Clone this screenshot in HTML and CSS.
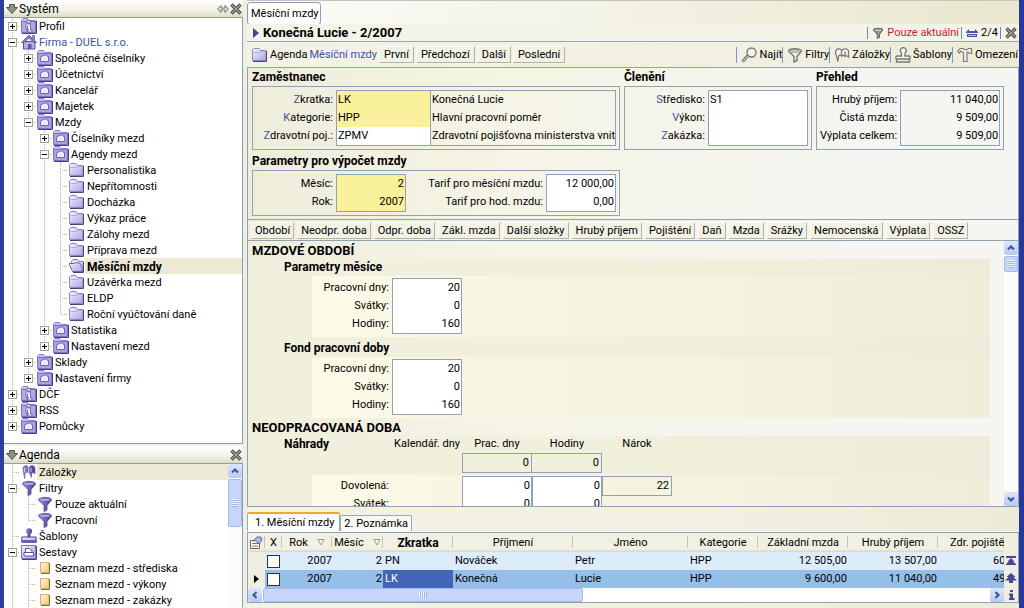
FILE: index.html
```html
<!DOCTYPE html>
<html lang="cs">
<head>
<meta charset="utf-8">
<title>Měsíční mzdy</title>
<link rel="stylesheet" href="styles.css">
</head>
<body>
<svg class="defs" aria-hidden="true">
  <defs>
    <linearGradient id="g" x1="0" y1="0" x2="1" y2="1"><stop offset="0" stop-color="#f4f2ff"/><stop offset="1" stop-color="#aaa2de"/></linearGradient>
    <linearGradient id="gd" x1="0" y1="0" x2="1" y2="0"><stop offset="0" stop-color="#9a92d6"/><stop offset="1" stop-color="#423b90"/></linearGradient>
    <linearGradient id="gy" x1="0" y1="0" x2="1" y2="1"><stop offset="0" stop-color="#fff6d8"/><stop offset="1" stop-color="#f3c878"/></linearGradient>
  </defs>
  <symbol id="folder" viewBox="0 0 16 16"><path d="M.5 13.500V3L2 1.500h5L8.500 3.500H14v10z" fill="url(#g)" stroke="#8d86c4"/><path d="M1.500 5.500H8l1-1h5" fill="none" stroke="#b0abd8"/><path d="M14.500 4v10.500H1" fill="none" stroke="#4a4580" stroke-width="1"/></symbol>
  <symbol id="open" viewBox="0 0 16 16"><path d="M3.500 12.500 2.500 3.500 4 1.500h4.500l1.500 2h4v9z" fill="#e8e4fb" stroke="#7a72b8"/><path d="M3.500 13.500-.2 5.500h5.700L7 4.500l4.500 1 2.500 8z" fill="url(#g)" stroke="#6a62a8"/><path d="M14.500 4v10.500H4" fill="none" stroke="#4a4580"/></symbol>
  <symbol id="book" viewBox="0 0 16 16"><path d="M.5 5V2L2 .5h4.500L8 2.500h6.500V5z" fill="#c9c3f0" stroke="#8a83c8"/><path d="M.5 3.500h14v11H.5z" fill="#aaa3e2" stroke="#7b73c2"/><path d="M3.500 11.500V7L5 6h1l1-1h2.500l1 1.500h1v5z" fill="#eceaff" stroke="#655db0" stroke-width=".9"/><path d="M15.500 3v12.500H1" fill="none" stroke="#443f84"/></symbol>
  <symbol id="info" viewBox="0 0 16 16"><path d="M.5 5V2L2 .5h4.500L8 2.500h6.500V5z" fill="#c9c3f0" stroke="#8a83c8"/><path d="M.5 3.500h14v11H.5z" fill="#b0a9e6" stroke="#7b73c2"/><path d="M6 2.500h3.500v2.500H6zM4.500 6h5v6H11v2H9.500M6.500 14V8h-2z" fill="#f4f2ff" stroke="#5d55a6" stroke-width=".8"/><path d="M15.500 3v12.500H1" fill="none" stroke="#443f84"/></symbol>
  <symbol id="home" viewBox="0 0 16 16"><path d="M11.500 1.500h2v5h-2z" fill="#a9a2de" stroke="#655db0" stroke-width=".8"/><path d="M2.500 7.500h11.500v7.500H2.500z" fill="#b4ade6" stroke="#5850a0"/><path d="M.5 8.500 8 1l7.500 7.500H13L8 4 3 8.500z" fill="#8c84cc" stroke="#524a9a" stroke-width=".8"/><path d="M7 15v-5h3.500v5z" fill="#625aa8"/></symbol>
  <symbol id="funnel" viewBox="0 0 16 16"><path d="M1.500 4c0-3.500 13-3.500 13 0L10 9.500V14l-3 1.500v-6z" fill="url(#gd)" stroke="#463f92" stroke-width=".8"/><ellipse cx="8" cy="3.800" rx="5" ry="1.300" fill="#a9a2e2"/></symbol>
  <symbol id="flags" viewBox="0 0 16 16"><path d="M2 4c1-3 4-3 5-1v6C6 7.500 4 8 4 10l-.3 4.500L2.500 8zM8.500 3c1.500-2 4.500-2 5.500 1v6c-1-2-3-1-3.500 0v3.500L8.500 9z" fill="url(#gd)" stroke="#6a62b2" stroke-width=".8"/><path d="M3.500 4v4M10 4v4" stroke="#cdc8f2"/></symbol>
  <symbol id="stamp" viewBox="0 0 16 16"><circle cx="8" cy="3.300" r="3" fill="url(#gd)"/><path d="M6.500 5.500h3V9h-3z" fill="#5a53a4"/><path d="M.8 9h14.400v5.500H.8z" fill="url(#g)" stroke="#463f92"/><path d="M1 12h14v3H1z" fill="#6860b2"/></symbol>
  <symbol id="report" viewBox="0 0 16 16"><path d="M.5 1.500h14v13H.5z" fill="url(#g)" stroke="#7b73c2"/><path d="M4.500 8.500v-4h4L11 7v1.500M3 8.500h9.500v3.500H3z" fill="#fff" stroke="#5a529c"/><path d="M15.500 2v13.500H1" fill="none" stroke="#443f84"/></symbol>
  <symbol id="page" viewBox="0 0 16 16"><path d="M3.500 2.500h8.500v10H3.500z" fill="url(#gy)" stroke="#d9ae6a"/><path d="M12.500 3v10.500H4" fill="none" stroke="#8a6a3a"/></symbol>
  <symbol id="down" viewBox="0 0 12 12"><path d="M3.500 1.500h5v3h3L6 10.500l-5.500-6h3z" fill="#8e8e8a" stroke="#555"/></symbol>
  <symbol id="cross" viewBox="0 0 12 12"><path d="m1.500 1.500 9 9m0-9-9 9" stroke="#4a4a48" stroke-width="3.400"/><path d="m2 2 8 8m0-8-8 8" stroke="#a8a8a2" stroke-width="1.200"/></symbol>
  <symbol id="lr" viewBox="0 0 12 12"><path d="M.5 6 4 2.500V5h4V2.500L11.500 6 8 9.500V7H4v2.500z" fill="#ddd" stroke="#666" stroke-width=".9"/></symbol>
  <symbol id="gfunnel" viewBox="0 0 16 16"><path d="M1.500 4c0-3 13-3 13 0L10 9.500v4L7 15V9.500z" fill="#f0f0e8" stroke="#777" stroke-width="1.400"/><ellipse cx="8" cy="4" rx="4.500" ry="1.200" fill="none" stroke="#888"/></symbol>
  <symbol id="sfunnel" viewBox="0 0 16 16"><path d="M2 4c0-3 12-3 12 0l-4 5.500v4L7 15V9.500z" fill="#999" stroke="#666" stroke-width="1.400"/><path d="M4 4.500h8" stroke="#ddd"/></symbol>
  <symbol id="gfind" viewBox="0 0 16 16"><circle cx="10.500" cy="5.500" r="4.500" fill="#f4f4ee" stroke="#777" stroke-width="1.400"/><path d="m7 8.500-5.500 6" stroke="#777" stroke-width="3"/><path d="m7 9-5 5" stroke="#ddd"/></symbol>
  <symbol id="gflags" viewBox="0 0 16 16"><path d="M4 14.500 1.500 6c0-5 5-5 6-2.500V9C6.500 7.500 4.500 8 4.500 9.500zM7.500 4c1-2.500 5.500-3 7-.5V10c-1-1.500-3-1.500-3.500-.5-1-1.500-2.500-1.500-3.500-.5M11 4.500v5" fill="#f4f4ee" stroke="#777" stroke-width="1.200"/></symbol>
  <symbol id="gstamp" viewBox="0 0 16 16"><path d="M6.500 9V6a3 3 0 1 1 3.500 0v3h4c1.500 0 1.500 3 .5 3H1.500C.5 12 .5 9 2 9z" fill="#f4f4ee" stroke="#777" stroke-width="1.300"/><path d="M1.500 12v3h13v-3" fill="none" stroke="#777" stroke-width="1.300"/></symbol>
  <symbol id="ghammer" viewBox="0 0 16 16"><path d="M.8 4.500 3 1.500h3l1.500 1h3l1-1h3v5h-2l-1.500-1.500h-1v9.500H6.500V5.500L4 4 2.500 6z" fill="#f4f4ee" stroke="#777" stroke-width="1.200"/></symbol>
  <symbol id="rec" viewBox="0 0 12 12"><path d="M0 5 3 2v2h6V2l3 3v1H0zM1 7h10v3H1z" fill="#4a51a8"/><path d="M2 8.500h8" stroke="#b9bce4"/></symbol>
  <symbol id="up" viewBox="0 0 14 14"><path d="m4 8.500 3-3 3 3" fill="none" stroke="#43578f" stroke-width="2.200"/></symbol>
  <symbol id="dn" viewBox="0 0 14 14"><path d="m4 5.500 3 3 3-3" fill="none" stroke="#43578f" stroke-width="2.200"/></symbol>
  <symbol id="lt" viewBox="0 0 14 14"><path d="m8.500 4-3 3 3 3" fill="none" stroke="#43578f" stroke-width="2.200"/></symbol>
  <symbol id="rt" viewBox="0 0 14 14"><path d="m5.500 4 3 3-3 3" fill="none" stroke="#43578f" stroke-width="2.200"/></symbol>
  <symbol id="props" viewBox="0 0 14 14"><path d="M1.500 4.500h9v8h-9z" fill="#fff" stroke="#8a5a5a"/><path d="M3 7.500h6M3 10h6" stroke="#a06060"/><path d="m4 5 4-4h4l1 3-3 4-3-3z" fill="#a9b4e8" stroke="#4a528f" stroke-width=".8"/></symbol>
  <symbol id="top" viewBox="0 0 12 12"><path d="M1 1h10v2H1zM6 3l3.500 3.500H8L11 9v1H1V9l3-2.500H2.500z" fill="#4b469c"/></symbol>
  <symbol id="pgup" viewBox="0 0 12 12"><path d="m6 1 4.500 4H8.500L12 8.500H8V11H4V8.500H0L3.500 5h-2z" fill="#4b469c"/></symbol>
  <symbol id="inf" viewBox="0 0 12 12"><path d="M5 1h3v2H5zM4 4.500h4v4.500h1.500v2H4V9h1V6.500H4z" fill="#4b469c"/></symbol>
  <symbol id="sort" viewBox="0 0 8 8"><path d="M1 1.500h6L4 7z" fill="#f8f8f0" stroke="#99988a"/></symbol>
</svg>

<div class="app">
  <aside class="side">
    <header class="side-head"><svg class="i12"><use href="#down"/></svg><h2>Systém</h2><button class="ib" aria-label="Šířka"><svg class="i12"><use href="#lr"/></svg></button><button class="ib" aria-label="Zavřít Systém"><svg class="i12"><use href="#cross"/></svg></button></header>
    <nav class="tree-box system">
      <ul class="tree">
        <li><div class="row"><span class="tw"><button class="box plus" aria-label="Rozbalit"></button></span><svg><use href="#info"/></svg><a href="#">Profil</a></div></li>
        <li><div class="row"><span class="tw"><button class="box" aria-label="Sbalit"></button></span><svg><use href="#home"/></svg><a class="blue" href="#">Firma - DUEL s.r.o.</a></div>
          <ul>
            <li><div class="row"><span class="tw"><button class="box plus" aria-label="Rozbalit"></button></span><svg><use href="#book"/></svg><a href="#">Společné číselníky</a></div></li>
            <li><div class="row"><span class="tw"><button class="box plus" aria-label="Rozbalit"></button></span><svg><use href="#book"/></svg><a href="#">Účetnictví</a></div></li>
            <li><div class="row"><span class="tw"><button class="box plus" aria-label="Rozbalit"></button></span><svg><use href="#book"/></svg><a href="#">Kancelář</a></div></li>
            <li><div class="row"><span class="tw"><button class="box plus" aria-label="Rozbalit"></button></span><svg><use href="#book"/></svg><a href="#">Majetek</a></div></li>
            <li><div class="row"><span class="tw"><button class="box" aria-label="Sbalit"></button></span><svg><use href="#book"/></svg><a href="#">Mzdy</a></div>
              <ul>
                <li><div class="row"><span class="tw"><button class="box plus" aria-label="Rozbalit"></button></span><svg><use href="#book"/></svg><a href="#">Číselníky mezd</a></div></li>
                <li><div class="row"><span class="tw"><button class="box" aria-label="Sbalit"></button></span><svg><use href="#book"/></svg><a href="#">Agendy mezd</a></div>
                  <ul>
                    <li><div class="row"><span class="tw"></span><svg><use href="#folder"/></svg><a href="#">Personalistika</a></div></li>
                    <li><div class="row"><span class="tw"></span><svg><use href="#folder"/></svg><a href="#">Nepřítomnosti</a></div></li>
                    <li><div class="row"><span class="tw"></span><svg><use href="#folder"/></svg><a href="#">Docházka</a></div></li>
                    <li><div class="row"><span class="tw"></span><svg><use href="#folder"/></svg><a href="#">Výkaz práce</a></div></li>
                    <li><div class="row"><span class="tw"></span><svg><use href="#folder"/></svg><a href="#">Zálohy mezd</a></div></li>
                    <li><div class="row"><span class="tw"></span><svg><use href="#folder"/></svg><a href="#">Příprava mezd</a></div></li>
                    <li><div class="row"><span class="tw"></span><svg><use href="#open"/></svg><a class="sel bold" href="#">Měsíční mzdy</a></div></li>
                    <li><div class="row"><span class="tw"></span><svg><use href="#folder"/></svg><a href="#">Uzávěrka mezd</a></div></li>
                    <li><div class="row"><span class="tw"></span><svg><use href="#folder"/></svg><a href="#">ELDP</a></div></li>
                    <li><div class="row"><span class="tw"></span><svg><use href="#folder"/></svg><a href="#">Roční vyúčtování daně</a></div></li>
                  </ul></li>
                <li><div class="row"><span class="tw"><button class="box plus" aria-label="Rozbalit"></button></span><svg><use href="#book"/></svg><a href="#">Statistika</a></div></li>
                <li><div class="row"><span class="tw"><button class="box plus" aria-label="Rozbalit"></button></span><svg><use href="#book"/></svg><a href="#">Nastavení mezd</a></div></li>
              </ul></li>
            <li><div class="row"><span class="tw"><button class="box plus" aria-label="Rozbalit"></button></span><svg><use href="#book"/></svg><a href="#">Sklady</a></div></li>
            <li><div class="row"><span class="tw"><button class="box plus" aria-label="Rozbalit"></button></span><svg><use href="#book"/></svg><a href="#">Nastavení firmy</a></div></li>
          </ul></li>
        <li><div class="row"><span class="tw"><button class="box plus" aria-label="Rozbalit"></button></span><svg><use href="#info"/></svg><a href="#">DČF</a></div></li>
        <li><div class="row"><span class="tw"><button class="box plus" aria-label="Rozbalit"></button></span><svg><use href="#info"/></svg><a href="#">RSS</a></div></li>
        <li><div class="row"><span class="tw"><button class="box plus" aria-label="Rozbalit"></button></span><svg><use href="#book"/></svg><a href="#">Pomůcky</a></div></li>
      </ul>
    </nav>
    <header class="side-head"><svg class="i12"><use href="#down"/></svg><h2>Agenda</h2><button class="ib" aria-label="Zavřít Agenda"><svg class="i12"><use href="#cross"/></svg></button></header>
    <nav class="tree-box agenda">
      <ul class="tree">
        <li><div class="row"><span class="tw"></span><svg><use href="#flags"/></svg><a class="sel" href="#">Záložky</a></div></li>
        <li><div class="row"><span class="tw"><button class="box" aria-label="Sbalit"></button></span><svg><use href="#funnel"/></svg><a href="#">Filtry</a></div>
          <ul>
            <li><div class="row"><span class="tw"></span><svg><use href="#funnel"/></svg><a href="#">Pouze aktuální</a></div></li>
            <li><div class="row"><span class="tw"></span><svg><use href="#funnel"/></svg><a href="#">Pracovní</a></div></li>
          </ul></li>
        <li><div class="row"><span class="tw"></span><svg><use href="#stamp"/></svg><a href="#">Šablony</a></div></li>
        <li class="more"><div class="row"><span class="tw"><button class="box" aria-label="Sbalit"></button></span><svg><use href="#report"/></svg><a href="#">Sestavy</a></div>
          <ul>
            <li><div class="row"><span class="tw"></span><svg><use href="#page"/></svg><a href="#">Seznam mezd - střediska</a></div></li>
            <li><div class="row"><span class="tw"></span><svg><use href="#page"/></svg><a href="#">Seznam mezd - výkony</a></div></li>
            <li class="more"><div class="row"><span class="tw"></span><svg><use href="#page"/></svg><a href="#">Seznam mezd - zakázky</a></div></li>
          </ul></li>
      </ul>
      <div class="vscroll"><button class="sb" aria-label="Nahoru"><svg><use href="#up"/></svg></button><span class="thumb tall"><i></i></span></div>
    </nav>
  </aside>

  <main class="main">
    <div class="doc-tabs"><button class="doc-tab">Měsíční mzdy</button></div>
    <header class="title-bar">
      <i class="arrow"></i><h1>Konečná Lucie - 2/2007</h1>
      <span class="seg red"><svg class="i12"><use href="#sfunnel"/></svg>Pouze aktuální</span>
      <span class="seg"><svg class="i12"><use href="#rec"/></svg>2/4</span>
      <span class="seg"><button class="ib" aria-label="Zavřít"><svg class="i12"><use href="#cross"/></svg></button></span>
    </header>
    <div class="toolbar">
      <svg class="i16"><use href="#folder"/></svg><span>Agenda</span><a class="blue" href="#">Měsíční mzdy</a>
      <div class="nav-btns"><button class="btn">První</button><button class="btn">Předchozí</button><button class="btn">Další</button><button class="btn">Poslední</button></div>
      <div class="tools">
        <button class="tool"><svg class="i16"><use href="#gfind"/></svg>Najít</button>
        <button class="tool"><svg class="i16"><use href="#gfunnel"/></svg>Filtry</button>
        <button class="tool"><svg class="i16"><use href="#gflags"/></svg>Záložky</button>
        <button class="tool"><svg class="i16"><use href="#gstamp"/></svg>Šablony</button>
        <button class="tool"><svg class="i16"><use href="#ghammer"/></svg>Omezení</button>
      </div>
    </div>

    <section class="card">
      <div class="summary">
        <fieldset class="group wide">
          <legend>Zaměstnanec</legend>
          <div class="frame">
            <div class="labels"><label for="zk"><b>Z</b>kratka:</label><label for="ka"><b>K</b>ategorie:</label><label for="zp"><b>Z</b>dravotní poj.:</label></div>
            <div class="stack code"><input class="y" id="zk" value="LK"><input class="y" id="ka" value="HPP"><input id="zp" value="ZPMV"></div>
            <div class="stack plain grow"><output for="zk">Konečná Lucie</output><output for="ka">Hlavní pracovní poměr</output><output for="zp">Zdravotní pojišťovna ministerstva vnit</output></div>
          </div>
        </fieldset>
        <fieldset class="group">
          <legend>Členění</legend>
          <div class="frame">
            <div class="labels"><label for="st"><b>S</b>tředisko:</label><label for="vy"><b>V</b>ýkon:</label><label for="za"><b>Z</b>akázka:</label></div>
            <div class="stack w100"><input id="st" value="S1"><input id="vy"><input id="za"></div>
          </div>
        </fieldset>
        <fieldset class="group">
          <legend>Přehled</legend>
          <div class="frame">
            <div class="labels"><label for="hp">Hrubý příjem:</label><label for="cm">Čistá mzda:</label><label for="vc">Výplata celkem:</label></div>
            <div class="stack plain num w100"><output id="hp">11 040,00</output><output id="cm">9 509,00</output><output id="vc">9 509,00</output></div>
          </div>
        </fieldset>
        <fieldset class="group wide">
          <legend>Parametry pro výpočet mzdy</legend>
          <div class="frame">
            <div class="labels"><label for="me">Měsíc:</label><label for="ro">Rok:</label></div>
            <div class="stack num w70"><input class="y" id="me" value="2"><input class="y" id="ro" value="2007"></div>
            <div class="labels"><label for="tm">Tarif pro měsíční mzdu:</label><label for="th">Tarif pro hod. mzdu:</label></div>
            <div class="stack num w70"><input id="tm" value="12 000,00"><input id="th" value="0,00"></div>
          </div>
        </fieldset>
      </div>

      <div class="jump">
        <button class="btn">Období</button><button class="btn">Neodpr. doba</button><button class="btn">Odpr. doba</button><button class="btn">Zákl. mzda</button><button class="btn">Další složky</button><button class="btn">Hrubý příjem</button><button class="btn">Pojištění</button><button class="btn">Daň</button><button class="btn">Mzda</button><button class="btn">Srážky</button><button class="btn">Nemocenská</button><button class="btn">Výplata</button><button class="btn">OSSZ</button>
      </div>

      <div class="detail">
        <div class="form">
          <section>
            <h2>MZDOVÉ OBDOBÍ</h2>
            <div class="sub">
              <h3>Parametry měsíce</h3>
              <div class="inner">
                <div class="labels"><label for="a1">Pracovní dny:</label><label for="a2">Svátky:</label><label for="a3">Hodiny:</label></div>
                <div class="stack num w70"><input id="a1" value="20"><input id="a2" value="0"><input id="a3" value="160"></div>
              </div>
            </div>
            <div class="sub">
              <h3>Fond pracovní doby</h3>
              <div class="inner">
                <div class="labels"><label for="b1">Pracovní dny:</label><label for="b2">Svátky:</label><label for="b3">Hodiny:</label></div>
                <div class="stack num w70"><input id="b1" value="20"><input id="b2" value="0"><input id="b3" value="160"></div>
              </div>
            </div>
          </section>
          <section>
            <h2>NEODPRACOVANÁ DOBA</h2>
            <div class="sub">
              <div class="cols heads"><h3>Náhrady</h3><span>Kalendář. dny</span><span>Prac. dny</span><span>Hodiny</span><span>Nárok</span></div>
              <div class="cols totals"><span></span><span></span><output class="cell">0</output><output class="cell">0</output></div>
              <div class="inner leave">
                <div class="labels"><label for="d1">Dovolená:</label><label for="s1">Svátek:</label></div>
                <span></span>
                <div class="stack num"><input id="d1" value="0"><input id="s1" value="0"></div>
                <div class="stack num"><input aria-label="Dovolená, hodiny" value="0"><input aria-label="Svátek, hodiny" value="0"></div>
                <output class="cell">22</output>
              </div>
            </div>
          </section>
        </div>
        <div class="vscroll"><button class="sb" aria-label="Nahoru"><svg><use href="#up"/></svg></button><span class="thumb"><i></i></span><button class="sb end" aria-label="Dolů"><svg><use href="#dn"/></svg></button></div>
      </div>
    </section>

    <div class="list-tabs"><button class="ltab on">1. Měsíční mzdy</button><button class="ltab">2. Poznámka</button></div>
    <section class="list">
      <div class="list-body">
        <table>
          <colgroup><col class="c17"><col class="c17"><col class="c50"><col class="c51"><col class="c70"><col class="c120"><col class="c115"><col class="c70"><col class="c90"><col class="c90"><col></colgroup>
          <thead><tr><th><svg class="i14"><use href="#props"/></svg></th><th>X</th><th class="s"><span>Rok</span><svg class="i8"><use href="#sort"/></svg></th><th class="s"><span>Měsíc</span><svg class="i8"><use href="#sort"/></svg></th><th class="bold">Zkratka</th><th>Příjmení</th><th>Jméno</th><th>Kategorie</th><th>Základní mzda</th><th>Hrubý příjem</th><th class="cut">Zdr. pojiště</th></tr></thead>
          <tbody>
            <tr><td class="mark"></td><td class="ck"><input type="checkbox" aria-label="Vybrat PN"></td><td class="r">2007</td><td class="r">2</td><td>PN</td><td>Nováček</td><td>Petr</td><td>HPP</td><td class="r">12 505,00</td><td class="r">13 507,00</td><td class="tail">60</td></tr>
            <tr class="cur"><td class="mark"><i></i></td><td class="ck"><input type="checkbox" aria-label="Vybrat LK"></td><td class="r">2007</td><td class="r">2</td><td class="foc">LK</td><td>Konečná</td><td>Lucie</td><td>HPP</td><td class="r">9 600,00</td><td class="r">11 040,00</td><td class="tail">49</td></tr>
          </tbody>
        </table>
        <div class="hscroll"><button class="sb" aria-label="Vlevo"><svg><use href="#lt"/></svg></button><span class="thumb"><i></i></span><button class="sb end" aria-label="Vpravo"><svg><use href="#rt"/></svg></button></div>
      </div>
      <div class="list-side"><button class="ib" aria-label="Na začátek"><svg class="i12"><use href="#top"/></svg></button><button class="ib" aria-label="Nahoru o stránku"><svg class="i12"><use href="#pgup"/></svg></button><button class="ib" aria-label="Informace"><svg class="i12"><use href="#inf"/></svg></button></div>
    </section>
  </main>
</div>
</body>
</html>
```
FILE: styles.css
```css
* { box-sizing: border-box; }
body { margin: 0; font: 11px/16px Roboto, "Liberation Sans", sans-serif; color: #000; background: #efeee0; }
h1, h2, h3, ul, fieldset { margin: 0; padding: 0; border: 0; font-size: 11px; min-width: 0; }
ul { list-style: none; }
button, input { font: inherit; color: inherit; margin: 0; padding: 0; border: 0; background: none; border-radius: 0; }
a { color: inherit; text-decoration: none; }
svg { display: block; flex: none; }
.defs { position: absolute; width: 0; height: 0; }
.i8 { width: 8px; height: 8px; }
.i12 { width: 12px; height: 12px; }
.i14 { width: 14px; height: 14px; }
.i16 { width: 16px; height: 16px; }
.blue { color: #3a52a0; }
.bold { font: bold 12px/16px Roboto, sans-serif; }
.ib { display: block; flex: none; }

.app { display: flex; height: 100vh; overflow: hidden; border: solid #2b3f9e; border-width: 0 5px 0 4px; border-right-color: #26389a; }

/* sidebar */
.side { width: 239px; flex: none; display: flex; flex-direction: column; margin-right: 4px; background: #f3f2e8; }
.side-head { display: flex; align-items: center; gap: 1px; height: 17px; flex: none; padding: 0 1px 0 2px; background: linear-gradient(#fff, #f2f1e6 60%, #dfdcc4); }
.side-head h2 { flex: 1; font-weight: normal; }
.tree-box { background: #fff; border: 1px solid #8aa0b4; border-left: 0; overflow: hidden; }
.system { flex: none; height: 427px; margin-bottom: 2px; }
.agenda { flex: 1; display: flex; border-bottom: 0; }
.tree { flex: 1; min-width: 0; }
.tree ul { padding-left: 16px; }
.tree li, .tw { background: repeating-linear-gradient(#b4b4a4 0 1px, transparent 1px 2px) 8px 0 / 1px 100% no-repeat; }
.tree li:last-child { background-image: none; }
.tree li.more:last-child { background-image: repeating-linear-gradient(#b4b4a4 0 1px, transparent 1px 2px); }
.row { display: flex; align-items: center; height: 16px; }
.row svg { width: 16px; height: 16px; margin-left: 1px; }
.row a { flex: 1; height: 16px; padding-left: 2px; line-height: 18px; white-space: nowrap; }
.row a.sel { background: #ece9d4; }
.tw { width: 16px; height: 16px; flex: none; background: repeating-linear-gradient(#b4b4a4 0 1px, transparent 1px 2px) 8px 0 / 1px 8px no-repeat, repeating-linear-gradient(90deg, #b4b4a4 0 1px, transparent 1px 2px) 8px 8px / 8px 1px no-repeat; }
.box { display: block; width: 9px; height: 9px; margin: 4px; border: 1px solid #a4a292; background: linear-gradient(#000, #000) center / 5px 1px no-repeat, #fff; }
.box.plus { background: linear-gradient(#000, #000) center / 5px 1px no-repeat, linear-gradient(#000, #000) center / 1px 5px no-repeat, #fff; }

/* scroll bars */
.vscroll { width: 14px; flex: none; display: flex; flex-direction: column; gap: 1px; background: #fbfbf8; }
.sb { width: 14px; height: 14px; flex: none; border-radius: 2px; background: linear-gradient(#dce6fd, #b8c9f4); }
.sb svg { width: 14px; height: 14px; }
.vscroll .end { margin-top: auto; }
.hscroll .end { margin-left: auto; }
.thumb { display: flex; align-items: center; justify-content: center; height: 16px; border: 1px solid #a5b8ea; border-radius: 2px; background: #c8d5fa; }
.thumb.tall { height: 48px; }
.thumb i { width: 6px; height: 8px; background: repeating-linear-gradient(#f4f7ff 0 1px, #9db1e6 1px 2px); }

/* main column */
.main { flex: 1; min-width: 0; display: flex; flex-direction: column; padding-bottom: 5px; background: linear-gradient(90deg, #f3f2e6, #f2f0e2 60%, #ecebd8); }
.doc-tabs { height: 24px; flex: none; padding-top: 1px; border-top: 1px solid #c5c4ba; background: linear-gradient(90deg, #fcfcfa, #e9e7ce); }
.doc-tab { height: 23px; padding: 0 1px 0 3px; border: 1px solid #8a9fc0; border-radius: 3px; background: #fff; }
.title-bar { display: flex; align-items: center; height: 18px; flex: none; padding: 0 2px 0 6px; border-bottom: 1px solid #97a8b8; background: #f4f3e8; }
.title-bar h1 { flex: 1; font: bold 13px/16px Roboto, sans-serif; }
.arrow { border: solid transparent; border-width: 5px 0 5px 6px; border-left-color: #4a4398; margin-right: 4px; }
.seg { display: flex; align-items: center; gap: 3px; height: 12px; padding: 0 2px 0 4px; border-left: 1px solid #6f86c4; }
.seg:last-child { padding-right: 0; }
.red { color: #cc2030; }
.toolbar { display: flex; align-items: center; height: 25px; flex: none; gap: 2px; padding: 0 1px 0 5px; }
.nav-btns, .tools { display: flex; gap: 2px; }
.tools { margin-left: auto; gap: 0; }
.btn { height: 17px; padding: 0 3px; border: 1px solid; border-color: #fbfbf4 #b4b2a0 #b4b2a0 #fbfbf4; white-space: nowrap; background: #f2f1e6; }
.nav-btns .btn { padding: 0 4px; }
.tool { display: flex; align-items: center; gap: 2px; height: 16px; padding: 0 0 0 4px; border-left: 1px solid #7f93c4; }

.card { flex: 1; min-height: 0; display: flex; flex-direction: column; border: 1px solid #8fa2b4; background: linear-gradient(90deg, #efeedd, #f5f4e6 35%, #f5f5f1 80%); }
.summary { display: flex; flex-wrap: wrap; align-items: flex-start; gap: 2px 4px; padding: 0 4px 3px; flex: none; }
.group { width: 188px; }
.group.wide { width: 368px; }
.group.wide:last-child { margin-right: 200px; }
legend, h2, h3 { padding: 0; font: bold 12px/16px Roboto, sans-serif; }
legend { display: block; padding-top: 1px; }
.frame { display: flex; margin-top: 1px; padding: 3px; border: 1px solid #8fa2b4; }
.labels { flex: 1; display: flex; flex-direction: column; padding: 1px 3px 0 0; text-align: right; line-height: 18px; white-space: nowrap; }
.wide .labels:first-child { flex: 0 0 80px; }
.labels b { font-weight: normal; color: #3a52a0; }
.stack { display: flex; flex-direction: column; border: 1px solid #8fa2b4; background: #fff; overflow: hidden; }
.stack.plain { background: none; }
.stack input, .stack output { display: block; width: 100%; height: 18px; padding: 0 1px; line-height: 18px; white-space: nowrap; overflow: hidden; }
.stack input.y { background: #f9f09c; }
.stack.num input, .stack.num output { text-align: right; }
.w100 { width: 100px; flex: none; }
.code { width: 94px; flex: none; border-right: 0; }
.w70 { width: 70px; flex: none; }
.grow { flex: 1; min-width: 0; }

.jump { display: flex; align-items: center; gap: 3px; height: 22px; flex: none; padding: 0 3px; border: solid #8fa2b4; border-width: 1px 0; }
.detail { flex: 1; min-height: 0; display: flex; overflow: hidden; }
.form { flex: 1; min-width: 0; overflow: hidden; padding-right: 14px; }
.form h2 { padding: 1px 0 0 4px; font-size: 13px; line-height: 17px; }
.sub { margin-left: 32px; background: linear-gradient(90deg, #f1f0de, #f1f0dc 50%, #edecda); }
.sub h3 { padding-left: 4px; line-height: 17px; }
.inner { display: flex; margin-left: 32px; padding: 2px 0 3px; background: linear-gradient(90deg, #fcfbe8, #f7f5e0 30%, #f4f3de 60%, #eeedda); }
.inner .labels { flex: 0 0 80px; }
.sub + .sub h3 { padding-top: 3px; }
.cols { display: grid; grid-template-columns: 112px repeat(4, 70px); text-align: center; }
.cols h3 { text-align: left; }
.totals { padding-bottom: 2px; }
.cell { height: 20px; border: 1px solid #8fa2b4; padding: 0 2px; line-height: 18px; text-align: right; }
.totals .cell + .cell { border-left: 0; }
.leave { display: grid; grid-template-columns: 80px repeat(4, 70px); align-items: start; padding-top: 1px; }

/* record list */
.list-tabs { display: flex; align-items: flex-end; height: 25px; flex: none; padding-top: 5px; }
.ltab { height: 17px; padding: 0 3px; border: 1px solid #9aa8b4; border-bottom: 0; border-radius: 2px 2px 0 0; background: #f8f8f4; }
.ltab.on { height: 20px; padding: 0 5px 0 7px; border-top: 2px solid #f0a830; background: #fff; }
.list { display: flex; flex: none; border: 1px solid #8fa2b4; box-shadow: 0 -1px #fff; }
.list-body { flex: 1; min-width: 0; background: #fff; }
table { width: 100%; table-layout: fixed; border-collapse: collapse; }
.c17 { width: 17px; } .c50 { width: 50px; } .c51 { width: 51px; } .c70 { width: 70px; } .c90 { width: 90px; } .c115 { width: 115px; } .c120 { width: 120px; }
th, td { height: 18px; padding: 0 2px; overflow: hidden; white-space: nowrap; text-overflow: clip; text-align: left; font-weight: normal; }
th { height: 19px; padding: 0 1px; text-align: center; background: linear-gradient(90deg, transparent calc(100% - 1px), #c9c7b4 0) 0 / 100% 12px no-repeat, linear-gradient(#f1f0e4 85%, #d9d6bf); background-position: 0 3px, 0 0; }
th.bold { font-weight: bold; }
th.s svg { display: inline-block; margin-left: 9px; }
th.cut { padding: 0 0 0 12px; text-align: left; }
tbody tr { background: #dcecfb; }
tbody tr.cur { background: #95bfe8; }
td.mark { padding: 0 6px; background: #efeee0; }
.mark i { display: block; width: 0; border: solid transparent; border-width: 4px 0 4px 5px; border-left-color: #000; }
td.ck { padding: 0 2px; }
.ck input { appearance: none; display: block; width: 13px; height: 13px; border: 1px solid #333; background: #fff; }
td.r { text-align: right; padding-right: 1px; }
td.r:nth-child(3) { padding-right: 0; }
td.foc { background: #4265b8; color: #fff; }
td.tail { padding: 0 0 0 55px; }
.hscroll { display: flex; gap: 1px; height: 14px; }
.hscroll .thumb { width: 320px; height: 14px; }
.hscroll .thumb i { width: 8px; height: 6px; background: repeating-linear-gradient(90deg, #f4f7ff 0 1px, #9db1e6 1px 2px); }
.list-side { width: 14px; flex: none; display: flex; flex-direction: column; justify-content: flex-end; gap: 5px; padding: 0 1px 1px; background: #efeee0; }
```
